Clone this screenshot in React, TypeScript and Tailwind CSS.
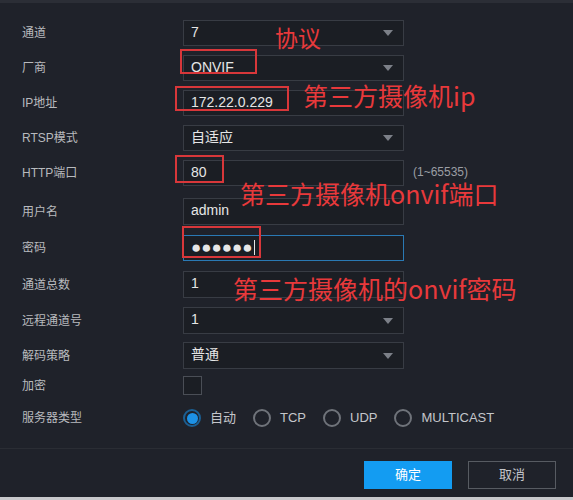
import React from "react";

const FONT = { fontFamily: '"Liberation Sans", "Noto Sans CJK SC", sans-serif' };

function Arrow() {
  return (
    <svg width="10" height="6" viewBox="0 0 10 6" className="absolute right-[10px] top-1/2 -translate-y-1/2">
      <path d="M0 0 L10 0 L5 6 Z" fill="#7c8088" />
    </svg>
  );
}

function Field({
  value,
  select,
  active,
  caret,
  dots,
}: {
  value: string;
  select?: boolean;
  active?: boolean;
  caret?: boolean;
  dots?: boolean;
}) {
  return (
    <div
      className={`relative flex h-full w-[221px] items-center border bg-[#1b1e24] pb-[2px] pl-[7px] text-[14px] text-[#e6e6e6] ${
        active ? "border-[#2a79b4]" : "border-[#383c44]"
      }`}
    >
      <span className={dots ? "text-[17px] leading-none" : ""}>{value}</span>
      {caret && <span className="ml-[1px] h-[15px] w-px bg-[#e6e6e6]" />}
      {select && <Arrow />}
    </div>
  );
}

function Radio({ label, checked }: { label: string; checked?: boolean }) {
  return (
    <div className="flex items-center gap-[9px]">
      {checked ? (
        <span className="flex h-[18px] w-[18px] items-center justify-center rounded-full border-2 border-[#1b5f93]">
          <span className="h-[11px] w-[11px] rounded-full bg-[#1d92e6]" />
        </span>
      ) : (
        <span className="h-[18px] w-[18px] rounded-full border-2 border-[#6f737a]" />
      )}
      <span className="text-[13px] text-[#c4c6ca]">{label}</span>
    </div>
  );
}

type Row = { label: string; mt: string; h: string; content: React.ReactNode };

const rows: Row[] = [
  { label: "通道", mt: "mt-[17px]", h: "h-[26px]", content: <Field value="7" select /> },
  { label: "厂商", mt: "mt-[9px]", h: "h-[26px]", content: <Field value="ONVIF" select /> },
  { label: "IP地址", mt: "mt-[9px]", h: "h-[26px]", content: <Field value="172.22.0.229" /> },
  { label: "RTSP模式", mt: "mt-[9px]", h: "h-[26px]", content: <Field value="自适应" select /> },
  {
    label: "HTTP端口",
    mt: "mt-[9px]",
    h: "h-[26px]",
    content: (
      <div className="flex h-full items-center">
        <Field value="80" />
        <span className="ml-[9px] pb-[3px] text-[12px] leading-none text-[#9b9ea4]">(1~65535)</span>
      </div>
    ),
  },
  { label: "用户名", mt: "mt-[12px]", h: "h-[27px]", content: <Field value="admin" /> },
  {
    label: "密码",
    mt: "mt-[10px]",
    h: "h-[26px]",
    content: <Field value="●●●●●●" active caret dots />,
  },
  { label: "通道总数", mt: "mt-[10px]", h: "h-[27px]", content: <Field value="1" /> },
  { label: "远程通道号", mt: "mt-[9px]", h: "h-[27px]", content: <Field value="1" select /> },
  { label: "解码策略", mt: "mt-[8px]", h: "h-[27px]", content: <Field value="普通" select /> },
  {
    label: "加密",
    mt: "mt-[7px]",
    h: "h-[20px]",
    content: <div className="h-[19px] w-[19px] border border-[#4a4e56] bg-[#1b1e24]" />,
  },
  {
    label: "服务器类型",
    mt: "mt-[11px]",
    h: "h-[22px]",
    content: (
      <div className="flex h-full items-center gap-[17px]">
        <Radio label="自动" checked />
        <Radio label="TCP" />
        <Radio label="UDP" />
        <Radio label="MULTICAST" />
      </div>
    ),
  },
];

const notes = [
  { text: "协议", cls: "left-[275px] top-[26px] text-[23px]" },
  { text: "第三方摄像机ip", cls: "left-[303px] top-[83px] text-[25px]" },
  { text: "第三方摄像机onvif端口", cls: "left-[240px] top-[181px] text-[25px]" },
  { text: "第三方摄像机的onvif密码", cls: "left-[233px] top-[276px] text-[25px]" },
];

const boxes = [
  "left-[180px] top-[49px] w-[77px] h-[25px]",
  "left-[175px] top-[86px] w-[114px] h-[25px]",
  "left-[175px] top-[155px] w-[49px] h-[28px]",
  "left-[182px] top-[226px] w-[79px] h-[32px]",
];

export default function App() {
  return (
    <div className="h-[500px] w-[573px] bg-[#c8c9cc]" style={FONT}>
      <div className="relative flex h-[497px] flex-col bg-[#1f222a]">
        <div className="h-[3px] bg-[#2b2e36]" />
        <div className="flex flex-1 flex-col">
          {rows.map((r) => (
            <div key={r.label} className={`flex items-center ${r.mt} ${r.h}`}>
              <div className="w-[183px] pl-[22px] text-[12px] text-[#b8babe]">{r.label}</div>
              <div className="h-full">{r.content}</div>
            </div>
          ))}
        </div>
        <div className="flex h-[49px] items-start justify-end gap-[16px] border-t border-[#2a2d34] pr-[17px] pt-[12px]">
          <button className="h-[28px] w-[88px] bg-[#139cf2] text-[13px] text-white">确定</button>
          <button className="h-[28px] w-[88px] border border-[#575b62] text-[13px] text-[#c4c6ca]">
            取消
          </button>
        </div>

        {boxes.map((b) => (
          <div key={b} className={`absolute border-2 border-[#d8373a] ${b}`} />
        ))}
        {notes.map((n) => (
          <div
            key={n.text}
            className={`absolute whitespace-nowrap leading-none text-[#e8393b] ${n.cls}`}
            style={{ fontFamily: '"Noto Sans CJK SC", sans-serif' }}
          >
            {n.text}
          </div>
        ))}
      </div>
    </div>
  );
}
